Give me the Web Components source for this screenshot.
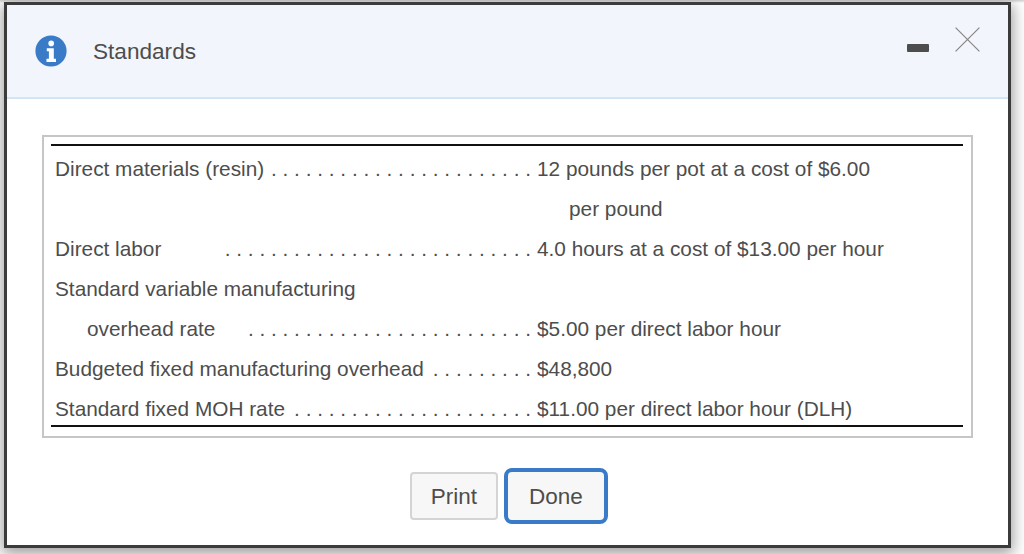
<!DOCTYPE html>
<html><head><meta charset="utf-8">
<style>
html,body{margin:0;padding:0;background:#fff;height:554px;overflow:hidden}
body{font-family:"Liberation Sans",Arial,sans-serif;color:#4d4d4d;background:linear-gradient(#cfcfcf,#fff 3px);padding:2px 0 0 4px;box-sizing:border-box}
</style></head><body>
<template id="t-dialog"><style>
:host{display:flex;flex-direction:column;box-sizing:border-box;width:1007px;height:546px;border:3px solid #3b3b3b;background:#fff;box-shadow:0 4px 14px 2px rgba(0,0,0,.38)}
main{flex:1;padding:36px 35px 0;display:flex;flex-direction:column}
footer{display:flex;justify-content:center;align-items:center;gap:6px;padding-top:30px;padding-left:3px}
</style><slot name="header"></slot><main><slot></slot><footer><slot name="actions"></slot></footer></main></template>

<template id="t-header"><style>
:host{display:flex;align-items:center;box-sizing:border-box;height:94px;background:#f2f5fb;border-bottom:2px solid #d2e5f6;padding:0 0 0 28px;color:#4d4d4d}
svg{display:block;flex:none}
.title{font-size:22.6px;margin-left:26px;padding-top:2px}
.tools{margin-left:auto;display:flex;align-items:flex-start;height:100%;box-sizing:border-box;padding-top:22px;padding-right:28px}
.min{width:22px;height:8px;background:#4d4d4d;border-radius:1px;margin-top:17px;margin-right:26px}
</style>
<svg width="32" height="32" viewBox="0 0 32 32"><circle cx="16" cy="16" r="15.6" fill="#3a7bc8"/><circle cx="16.2" cy="8.4" r="2.8" fill="#fff"/><path d="M11.8 13.2h7v10.6h2.2v3.1H11.5v-3.1h2.4v-7.5h-2.1z" fill="#fff"/></svg>
<span class="title"><slot></slot></span>
<div class="tools"><div class="min"></div>
<svg width="25" height="25" viewBox="0 0 25 25"><path d="M.6.6L24.4 24.4M24.4.6L.6 24.4" stroke="#858585" stroke-width="1.2" fill="none"/></svg></div></template>

<template id="t-table"><style>
:host{display:block;box-sizing:border-box;width:931px;height:303px;border:2px solid #c6c6c6;padding:7px 8px 0 7px}
.rule{border-top:2px solid #111;border-bottom:2px solid #111;height:283px;box-sizing:border-box;padding-top:3px}
</style><div class="rule"><slot></slot></div></template>

<template id="t-row"><style>
:host{display:grid;grid-template-columns:486px 1fr;height:40px;align-items:center;font-size:20.8px;color:#4d4d4d;white-space:pre}
.l{display:flex;justify-content:space-between;padding:0 6px 0 4px;box-sizing:border-box}
:host([indent]) .l{padding-left:36px}
:host([sub]) .v{padding-left:32px}
</style><div class="l"><span><slot></slot></span><span class="d"></span></div><div class="v"></div></template>

<template id="t-btn"><style>
:host{display:flex;align-items:center;justify-content:center;box-sizing:border-box;width:88px;height:48px;background:#f7f7f7;border:2px solid #d4d4d4;border-radius:4px;font-size:22.5px;color:#4d4d4d;padding-top:1px}
:host([primary]){width:104px;height:56px;border:4px solid #3a7bc8;border-radius:8px}
</style><slot></slot></template>

<std-dialog>
 <std-header slot="header">Standards</std-header>
 <std-table>
  <std-row dots="23" value="12 pounds per pot at a cost of $6.00">Direct materials (resin)</std-row>
  <std-row sub value="per pound"></std-row>
  <std-row dots="27" value="4.0 hours at a cost of $13.00 per hour">Direct labor</std-row>
  <std-row>Standard variable manufacturing</std-row>
  <std-row indent dots="25" value="$5.00 per direct labor hour">overhead rate</std-row>
  <std-row dots="9" value="$48,800">Budgeted fixed manufacturing overhead</std-row>
  <std-row dots="21" value="$11.00 per direct labor hour (DLH)">Standard fixed MOH rate</std-row>
 </std-table>
 <std-btn slot="actions">Print</std-btn>
 <std-btn slot="actions" primary>Done</std-btn>
</std-dialog>
<script>
function def(tag,tid,init){customElements.define(tag,class extends HTMLElement{constructor(){super();this.attachShadow({mode:"open"}).appendChild(document.getElementById(tid).content.cloneNode(true));}connectedCallback(){init&&init(this)}})}
def("std-dialog","t-dialog");def("std-header","t-header");def("std-table","t-table");def("std-btn","t-btn");
def("std-row","t-row",el=>{const n=+el.getAttribute("dots")||0;el.shadowRoot.querySelector(".d").textContent=n?Array(n).fill(".").join(" "):"";el.shadowRoot.querySelector(".v").textContent=el.getAttribute("value")||""});
</script>
</body></html>
